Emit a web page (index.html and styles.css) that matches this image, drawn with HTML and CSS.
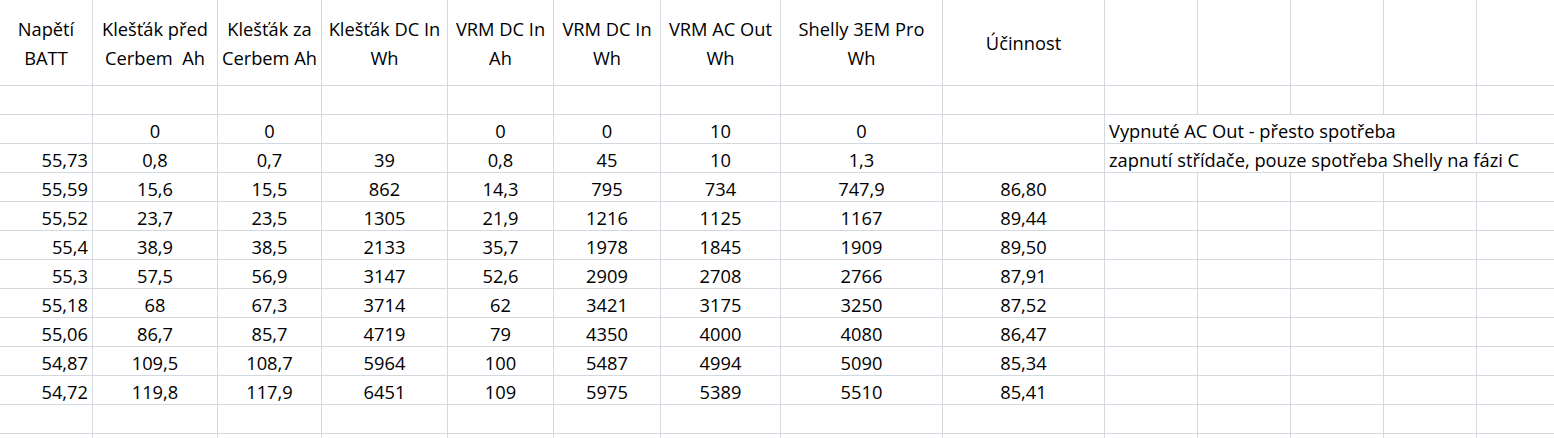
FILE: index.html
```html
<!DOCTYPE html>
<html lang="cs">
<head>
<meta charset="utf-8">
<title>Měření účinnosti</title>
<link rel="stylesheet" href="styles.css">
</head>
<body>
<div class="sheet">
  <div class="row head">
    <div class="c">Napětí<br>BATT</div>
    <div class="c">Klešťák před<br>Cerbem&nbsp; Ah</div>
    <div class="c">Klešťák za<br>Cerbem Ah</div>
    <div class="c">Klešťák DC In<br>Wh</div>
    <div class="c">VRM DC In<br>Ah</div>
    <div class="c">VRM DC In<br>Wh</div>
    <div class="c">VRM AC Out<br>Wh</div>
    <div class="c">Shelly 3EM Pro<br>Wh</div>
    <div class="c">Účinnost</div>
    <div class="c"></div><div class="c"></div><div class="c"></div><div class="c"></div><div class="c"></div>
  </div>
  <div class="row">
    <div class="c"></div><div class="c"></div><div class="c"></div><div class="c"></div><div class="c"></div><div class="c"></div><div class="c"></div><div class="c"></div><div class="c"></div>
    <div class="c"></div><div class="c"></div><div class="c"></div><div class="c"></div><div class="c"></div>
  </div>
  <div class="row">
    <div class="c num"></div><div class="c">0</div><div class="c">0</div><div class="c"></div><div class="c">0</div><div class="c">0</div><div class="c">10</div><div class="c">0</div><div class="c"></div>
    <div class="c note span4">Vypnuté AC Out - přesto spotřeba</div><div class="c"></div>
  </div>
  <div class="row">
    <div class="c num">55,73</div><div class="c">0,8</div><div class="c">0,7</div><div class="c">39</div><div class="c">0,8</div><div class="c">45</div><div class="c">10</div><div class="c">1,3</div><div class="c"></div>
    <div class="c note span5">zapnutí střídače, pouze spotřeba Shelly na fázi C</div>
  </div>
  <div class="row">
    <div class="c num">55,59</div><div class="c">15,6</div><div class="c">15,5</div><div class="c">862</div><div class="c">14,3</div><div class="c">795</div><div class="c">734</div><div class="c">747,9</div><div class="c">86,80</div>
    <div class="c"></div><div class="c"></div><div class="c"></div><div class="c"></div><div class="c"></div>
  </div>
  <div class="row">
    <div class="c num">55,52</div><div class="c">23,7</div><div class="c">23,5</div><div class="c">1305</div><div class="c">21,9</div><div class="c">1216</div><div class="c">1125</div><div class="c">1167</div><div class="c">89,44</div>
    <div class="c"></div><div class="c"></div><div class="c"></div><div class="c"></div><div class="c"></div>
  </div>
  <div class="row">
    <div class="c num">55,4</div><div class="c">38,9</div><div class="c">38,5</div><div class="c">2133</div><div class="c">35,7</div><div class="c">1978</div><div class="c">1845</div><div class="c">1909</div><div class="c">89,50</div>
    <div class="c"></div><div class="c"></div><div class="c"></div><div class="c"></div><div class="c"></div>
  </div>
  <div class="row">
    <div class="c num">55,3</div><div class="c">57,5</div><div class="c">56,9</div><div class="c">3147</div><div class="c">52,6</div><div class="c">2909</div><div class="c">2708</div><div class="c">2766</div><div class="c">87,91</div>
    <div class="c"></div><div class="c"></div><div class="c"></div><div class="c"></div><div class="c"></div>
  </div>
  <div class="row">
    <div class="c num">55,18</div><div class="c">68</div><div class="c">67,3</div><div class="c">3714</div><div class="c">62</div><div class="c">3421</div><div class="c">3175</div><div class="c">3250</div><div class="c">87,52</div>
    <div class="c"></div><div class="c"></div><div class="c"></div><div class="c"></div><div class="c"></div>
  </div>
  <div class="row">
    <div class="c num">55,06</div><div class="c">86,7</div><div class="c">85,7</div><div class="c">4719</div><div class="c">79</div><div class="c">4350</div><div class="c">4000</div><div class="c">4080</div><div class="c">86,47</div>
    <div class="c"></div><div class="c"></div><div class="c"></div><div class="c"></div><div class="c"></div>
  </div>
  <div class="row">
    <div class="c num">54,87</div><div class="c">109,5</div><div class="c">108,7</div><div class="c">5964</div><div class="c">100</div><div class="c">5487</div><div class="c">4994</div><div class="c">5090</div><div class="c">85,34</div>
    <div class="c"></div><div class="c"></div><div class="c"></div><div class="c"></div><div class="c"></div>
  </div>
  <div class="row">
    <div class="c num">54,72</div><div class="c">119,8</div><div class="c">117,9</div><div class="c">6451</div><div class="c">109</div><div class="c">5975</div><div class="c">5389</div><div class="c">5510</div><div class="c">85,41</div>
    <div class="c"></div><div class="c"></div><div class="c"></div><div class="c"></div><div class="c"></div>
  </div>
  <div class="row">
    <div class="c"></div><div class="c"></div><div class="c"></div><div class="c"></div><div class="c"></div><div class="c"></div><div class="c"></div><div class="c"></div><div class="c"></div>
    <div class="c"></div><div class="c"></div><div class="c"></div><div class="c"></div><div class="c"></div>
  </div>
  <div class="row">
    <div class="c"></div><div class="c"></div><div class="c"></div><div class="c"></div><div class="c"></div><div class="c"></div><div class="c"></div><div class="c"></div><div class="c"></div>
    <div class="c"></div><div class="c"></div><div class="c"></div><div class="c"></div><div class="c"></div>
  </div>
</div>
</body>
</html>
```

FILE: styles.css
```css
html, body {
  margin: 0;
  padding: 0;
  background: #ffffff;
  overflow: hidden;
}

.sheet {
  font-family: "Open Sans", "Liberation Sans", sans-serif;
  font-size: 18.3px;
  color: #000000;
  width: 1554px;
  height: 438px;
  overflow: hidden;
}

.row {
  display: grid;
  grid-template-columns: 93px 125px 104px 126px 106px 107px 120px 162px 162px 93px 93px 93px 93px 93px;
  height: 29px;
}

.row.head {
  height: 86px;
}

.c {
  box-sizing: border-box;
  border-right: 1px solid #d4d8df;
  border-bottom: 1px solid #d4d8df;
  text-align: center;
  white-space: nowrap;
  line-height: 25px;
  padding-top: 2.5px;
  overflow: visible;
}

.head .c {
  display: flex;
  align-items: center;
  justify-content: center;
  line-height: 29px;
  padding-top: 0;
}

.c.num {
  text-align: right;
  padding-right: 4px;
}

.c.note {
  text-align: left;
  padding-left: 4px;
}

.span4 {
  grid-column: span 4;
}

.span5 {
  grid-column: span 5;
}
```
